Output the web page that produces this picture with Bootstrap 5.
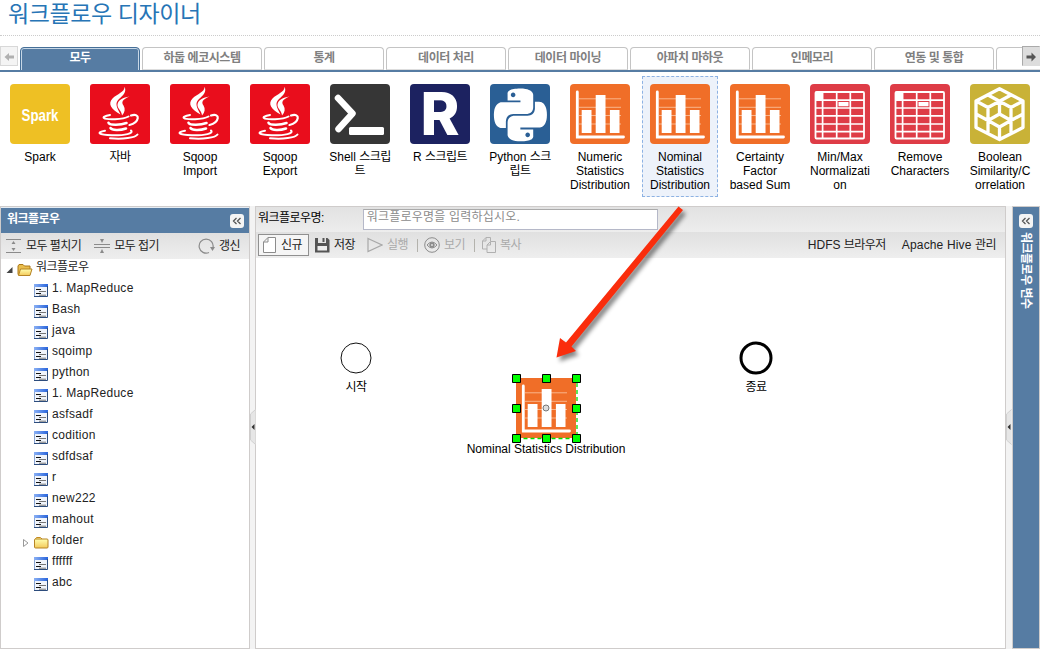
<!DOCTYPE html>
<html lang="ko">
<head>
<meta charset="utf-8">
<meta name="viewport" content="width=device-width, initial-scale=1">
<title>워크플로우 디자이너</title>
<link rel="stylesheet" href="https://cdn.jsdelivr.net/npm/bootstrap@5.3.0/dist/css/bootstrap.min.css">
<script src="https://cdn.jsdelivr.net/npm/bootstrap@5.3.0/dist/js/bootstrap.bundle.min.js"></script>
<style>
  :root { --blue: #567ca3; --line: #cfcccb; }
  body { width: 1040px; height: 649px; font: 12px/14px "Liberation Sans", "Noto Sans CJK KR", sans-serif; color: #222; background: #fff; }
  svg { display: block; flex: none; }
  .ko { letter-spacing: -.55px; }
  .page-title { height: 36px; padding: 0 0 0 8px; font-size: 23px; line-height: 28px; letter-spacing: -.4px; color: #2775b6; border-bottom: 1px dotted #ccc; }
  .tab-strip { height: 36px; padding: 11px 0 0 20px; border-bottom: 2px solid var(--blue); gap: 2px; }
  .tab-strip .tab-item { flex: 0 0 120px; height: 23px; border: 1px solid #c4c4c4; border-bottom-color: #ddd; border-radius: 4px 4px 0 0; text-align: center; font-weight: 700; line-height: 20px; letter-spacing: -.45px; color: #808080; box-shadow: inset 0 0 0 1px #fff; }
  .tab-strip .tab-item.active { color: #fff; background: var(--blue); border-color: #456f98; box-shadow: inset 0 1px 0 #c7d7e6, inset 1px 0 0 #c7d7e6, inset -1px 0 0 #c7d7e6; height: 24px; }
  .scroller { top: 10px; width: 18px; height: 20px; background: #f4f4f4; border: 1px solid #d8d8d8; }
  .scroller.next { right: 0; background: #ddd; border-color: #aaa #ddd #ddd #aaa; }
  .palette { height: 134px; padding: 4px 0 0 2px; gap: 4px; color: #000; }
  .tool { flex: 0 0 76px; height: 121px; padding: 7px 0 0 7px; border: 1px solid transparent; }
  .tool.picked { background: #edf2fa; border: 1px dashed #8db2e3; }
  .tool p { width: 60px; margin: 6px 0 0; text-align: center; white-space: nowrap; display: flex; flex-direction: column; align-items: center; }
  .tile { width: 60px; height: 60px; border-radius: 4px; }
  .tile-r { background: #1c2260; color: #fff; font: 800 59px/60px Inter, sans-serif; }
  .work { height: 443px; background: #f3f3f3; }
  .tree-panel { width: 250px; border: 1px solid var(--line); background: #fff; }
  .panel-head { height: 26px; background: var(--blue); border-top: 1px solid #e4ecf4; color: #fff; font-weight: 700; font-size: 12px; padding: 0 5px 0 6px; }
  .panel-head span { margin-top: -4px; }
  .collapser { width: 14px; height: 14px; background: #f4f4f4; border-radius: 3px; }
  .bar { height: 26px; background: linear-gradient(#e0e0e0, #eee); white-space: nowrap; }
  .bar span { margin-top: -1px; }
  .tree-row { height: 21px; padding-left: 33px; gap: 4px; white-space: nowrap; letter-spacing: .3px; margin-top: 0; }
  .tree-row svg { margin-top: 1px; }
  .tree-row span { margin-top: -5px; }
  .splitter { width: 6px; }
  .grip { left: 0; top: 203px; }
  .center-panel { width: 751px; border: 1px solid var(--line); background: #fff; }
  .name-row { height: 25px; background: linear-gradient(#e2e2e2, #ededed); padding-left: 2px; color: #000; }
  .name-input { width: 295px; height: 21px; margin-left: 39px; padding: 0 3px; border: 1px solid #b5b8c8; border-top-color: #aaa; background: #fff; color: #8c8c8c; line-height: 15px; letter-spacing: .2px; }
  .new-btn { width: 51px; height: 22px; border: 1px solid #909090; background: #f5f5f5; }
  .off { color: #aaa; }
  .sep { width: 1px; height: 13px; background: #b3b2ac; }
  .vars-panel { width: 28px; border: 1px solid var(--line); background: var(--blue); padding-top: 7px; }
  .vertical { writing-mode: vertical-rl; text-orientation: sideways; color: #fff; font-weight: 700; margin-top: 4px; letter-spacing: -.5px; }
  .node-text { color: #000; white-space: nowrap; transform: translateX(-50%); }
</style>
</head>
<body class="overflow-hidden position-relative">

<svg width="0" height="0" class="position-absolute" aria-hidden="true">
  <defs>
    <linearGradient id="fold" x2="0" y2="1"><stop stop-color="#ffffb0"/><stop offset="1" stop-color="#f3c95a"/></linearGradient>
    <linearGradient id="headblue"><stop stop-color="#8ab0f4"/><stop offset="1" stop-color="#2864dc"/></linearGradient>
    <symbol id="java" viewBox="0 0 60 60">
      <rect width="60" height="60" rx="3" fill="#e90d1c"/>
      <g fill="#fff">
        <path d="M34.5 2.8C37 8 33 11.500 29 15C25 19 26 22 30.500 30.500C21 25 17.500 20 22.500 14.500C27 10 35 8 34.500 2.800Z"/>
        <path d="M39.500 12.500C32.500 15.500 31 18 33.500 21.500C35.500 25 35 28 32 31.500C32 27 27 24.500 27.500 20.500C28 16 33 13.500 39.500 12.500Z"/>
      </g>
      <g fill="none" stroke="#fff" stroke-linecap="round">
        <path stroke-width="2" d="M20 31C9 33 13 35.700 25 35.200C31 35 36 34 38.500 32.500"/>
        <path stroke-width="2.200" d="M41 31.500C51 28.500 49.500 38.500 39.500 41"/>
        <path stroke-width="2.600" d="M18.500 38.800C19 41.200 30 41.500 36.500 39M20.500 44C22 46.500 30 46.500 36 44.500"/>
        <path stroke-width="2" d="M15 46.800C6 48.500 8 51 22 51.300C35 51.500 44 49.500 41 46.500M20 54.300C33 55.300 45 54 47.500 50.500"/>
      </g>
    </symbol>
    <symbol id="stats" viewBox="0 0 60 60">
      <path stroke="#f9b48a" stroke-width="1" d="M9 14.800H51M9 23.300H51M9 31.500H51M9 40H51"/>
      <path fill="none" stroke="#fff" stroke-width="2.800" stroke-linecap="round" d="M7.300 8V53H53.500"/>
      <path fill="#fff" d="M11.700 26h9.800v23h-9.800zM25.700 11h9.800v38h-9.800zM39.900 26h9.600v23h-9.600z"/>
    </symbol>
    <symbol id="grid" viewBox="0 0 60 60">
      <rect width="60" height="60" rx="4" fill="#de3c46"/>
      <rect x="5.500" y="8" width="48.500" height="46.500" rx="1" fill="none" stroke="#fff" stroke-width="1.800"/>
      <path stroke="#fff" stroke-width="1.700" d="M12.600 8V54.500M26.700 8V54.500M40.300 8V54.500M5.500 16.200H54M5.500 24H54M5.500 31.900H54M5.500 40H54M5.500 47.700H54"/>
      <path fill="#fff" d="M5.500 8H12.600V16.200H5.500zM28.500 18H38.500V22.200H28.500z"/>
    </symbol>
    <symbol id="leaf" viewBox="0 0 14 14">
      <path fill="#f0f4fb" d="M0 0h14v13H0z"/><path fill="url(#headblue)" d="M0 0h14v3H0z"/>
      <path fill="none" stroke="#8ba6d3" d="M.5 3V13"/><path fill="none" stroke="#2c4c7c" d="M13.500 2V12.500H0"/>
      <path stroke="#111" d="M2 5.500h5M2 9.500h5"/><path stroke="#777" d="M5 7.500h7M5 11.200h7"/>
    </symbol>
    <symbol id="chev" viewBox="0 0 14 14"><path fill="none" stroke="#555" stroke-width="1.300" d="M6.500 4 3.500 7l3 3M10.500 4l-3 3 3 3"/></symbol>
    <symbol id="grab" viewBox="0 0 6 36"><path fill="#e6e6e6" stroke="#d0d0d0" d="M5.500.5.5 5V31L5.500 35.500"/><path fill="#333" d="M4.500 15v6L1.500 18z"/></symbol>
  </defs>
</svg>

<h1 class="page-title m-0 fw-normal">워크플로우 디자이너</h1>

<nav class="tab-strip d-flex position-relative overflow-hidden">
  <div class="scroller position-absolute start-0"><svg width="16" height="18"><path fill="#b0b0b0" d="M3.500 10 8 6v2.500h5v3H8V14z"/></svg></div>
  <div class="tab-item active">모두</div><div class="tab-item">하둡 에코시스템</div><div class="tab-item">통계</div>
  <div class="tab-item">데이터 처리</div><div class="tab-item">데이터 마이닝</div><div class="tab-item">아파치 마하웃</div>
  <div class="tab-item">인메모리</div><div class="tab-item">연동 및 통합</div><div class="tab-item"></div>
  <div class="scroller next position-absolute"><svg width="16" height="18"><path fill="#555" d="M13 10 8.500 5.500v3h-5v3h5v3z"/></svg></div>
</nav>

<section class="palette d-flex">
  <div class="tool"><svg width="60" height="60"><rect width="60" height="60" rx="4" fill="#eec024"/><text x="11.500" y="37" textLength="37" lengthAdjust="spacingAndGlyphs" font-family="Liberation Sans" font-weight="700" font-size="16" fill="#fff">Spark</text></svg><p><span>Spark</span></p></div>
  <div class="tool"><svg width="60" height="60"><use href="#java"/></svg><p><span class="ko">자바</span></p></div>
  <div class="tool"><svg width="60" height="60"><use href="#java"/></svg><p><span>Sqoop</span><span>Import</span></p></div>
  <div class="tool"><svg width="60" height="60"><use href="#java"/></svg><p><span>Sqoop</span><span>Export</span></p></div>
  <div class="tool"><svg width="60" height="60"><rect width="60" height="60" rx="4" fill="#363636"/><path fill="none" stroke="#fff" stroke-width="6.500" stroke-linecap="round" stroke-linejoin="round" d="M8 14 22.500 29.500 8.500 45"/><rect x="19" y="43" width="35" height="8" rx="1.500" fill="#fff"/></svg><p><span>Shell <span class="ko">스크립</span></span><span>트</span></p></div>
  <div class="tool"><div class="tile tile-r text-center">R</div><p><span>R <span class="ko">스크립트</span></span></p></div>
  <div class="tool"><svg width="60" height="60"><rect width="60" height="60" rx="4" fill="#2a5f95"/><path fill="#fff" transform="translate(4 4.500) scale(2.200)" d="M14.25.18l.9.2.73.26.59.3.45.32.34.34.25.34.16.33.1.3.04.26.02.2-.01.13V8.5l-.05.63-.13.55-.21.46-.26.38-.3.31-.33.25-.35.19-.35.14-.33.1-.3.07-.26.04-.21.02H8.77l-.69.05-.59.14-.5.22-.41.27-.33.32-.27.35-.2.36-.15.37-.1.35-.07.32-.04.27-.02.21v3.06H3.17l-.21-.03-.28-.07-.32-.12-.35-.18-.36-.26-.36-.36-.35-.46-.32-.59-.28-.73-.21-.88-.14-1.05-.05-1.23.06-1.22.16-1.04.24-.87.32-.71.36-.57.4-.44.42-.33.42-.24.4-.16.36-.1.32-.05.24-.01h.16l.06.01h8.16v-.83H6.18l-.01-2.75-.02-.37.05-.34.11-.31.17-.28.25-.26.31-.23.38-.2.44-.18.51-.15.58-.12.64-.1.71-.06.77-.04.84-.02 1.27.05zm-6.3 1.98l-.23.33-.08.41.08.41.23.34.33.22.41.09.41-.09.33-.22.23-.34.08-.41-.08-.41-.23-.33-.33-.22-.41-.09-.41.09zm13.09 3.95l.28.06.32.12.35.18.36.27.36.35.35.47.32.59.28.73.21.88.14 1.04.05 1.23-.06 1.23-.16 1.04-.24.86-.32.71-.36.57-.4.45-.42.33-.42.24-.4.16-.36.09-.32.05-.24.02-.16-.01h-8.22v.82h5.84l.01 2.76.02.36-.05.34-.11.31-.17.29-.25.25-.31.24-.38.2-.44.17-.51.15-.58.13-.64.09-.71.07-.77.04-.84.01-1.27-.04-1.07-.14-.9-.2-.73-.25-.59-.3-.45-.33-.34-.34-.25-.34-.16-.33-.1-.3-.04-.25-.02-.2.01-.13v-5.34l.05-.64.13-.54.21-.46.26-.38.3-.32.33-.24.35-.2.35-.14.33-.1.3-.06.26-.04.21-.02.13-.01h5.84l.69-.05.59-.14.5-.21.41-.28.33-.32.27-.35.2-.36.15-.36.1-.35.07-.32.04-.28.02-.21V6.07h2.09l.14.01zm-6.47 14.25l-.23.33-.08.41.08.41.23.33.33.23.41.08.41-.08.33-.23.23-.33.08-.41-.08-.41-.23-.33-.33-.23-.41-.08-.41.08z"/></svg><p><span>Python <span class="ko">스크</span></span><span class="ko">립트</span></p></div>
  <div class="tool"><svg width="60" height="60"><rect width="60" height="60" rx="4" fill="#f06e28"/><use href="#stats"/></svg><p><span>Numeric</span><span>Statistics</span><span>Distribution</span></p></div>
  <div class="tool picked"><svg width="60" height="60"><rect width="60" height="60" rx="4" fill="#f06e28"/><use href="#stats"/></svg><p><span>Nominal</span><span>Statistics</span><span>Distribution</span></p></div>
  <div class="tool"><svg width="60" height="60"><rect width="60" height="60" rx="4" fill="#f06e28"/><use href="#stats"/></svg><p><span>Certainty</span><span>Factor</span><span>based Sum</span></p></div>
  <div class="tool"><svg width="60" height="60"><use href="#grid"/></svg><p><span>Min/Max</span><span>Normalizati</span><span>on</span></p></div>
  <div class="tool"><svg width="60" height="60"><use href="#grid"/></svg><p><span>Remove</span><span>Characters</span></p></div>
  <div class="tool"><svg width="60" height="60"><rect width="60" height="60" rx="4" fill="#c9b237"/><path fill="none" stroke="#fff" stroke-width="3.300" stroke-linejoin="round" d="M29.500 4.700 53 17V43.500L29.500 55.500 6 43.500V17zM18 11 41 23.500V49.500M41 11 18 23.500V49.500M6 17 18 23.500M53 17 41 23.500M29.500 17V30L18 36.500 29.500 43 41 36.500 29.500 30M6 30 18 36.500M53 30 41 36.500M29.500 43V55"/></svg><p><span>Boolean</span><span>Similarity/C</span><span>orrelation</span></p></div>
</section>

<main class="work d-flex">
  <aside class="tree-panel">
    <div class="panel-head d-flex align-items-center justify-content-between"><span class="ko">워크플로우</span><div class="collapser"><svg width="14" height="14"><use href="#chev"/></svg></div></div>
    <div class="bar d-flex align-items-center">
      <svg class="ms-1" width="17" height="16" fill="none" stroke="#8b8b8b"><path d="M1 1.500H16M1 14.500H16"/><path fill="#8b8b8b" stroke="none" d="M8.500 3l2 3h-4zM8.500 13l2-3h-4z"/></svg><span class="ko ms-1">모두 펼치기</span>
      <svg style="margin-left:13px" width="17" height="16"><path stroke="#8b8b8b" d="M0 6.500H16M0 9.500H16"/><path fill="#8b8b8b" d="M8 5l2-4H6zM8 11l2 4H6z"/></svg><span class="ko" style="margin-left:3px">모두 접기</span>
      <svg class="ms-auto" width="17" height="16"><path fill="none" stroke="#8b8b8b" stroke-width="1.200" d="M11 14.500A7 7 0 1 1 15 9.500"/><path fill="#8b8b8b" d="M12 9h5l-2.500 4z"/></svg><span class="ko" style="margin:-1px 9px 0 4px">갱신</span>
    </div>
    <div class="tree-row ps-1 d-flex align-items-center"><svg width="9" height="10"><path fill="#444" d="M7.500 2v6h-6z"/></svg><svg width="16" height="14" style="margin-left:-1px"><path fill="#e9bd4d" stroke="#ac7918" d="M1 11.500V3l1-1.500h4L7.500 3H13v8.500z"/><path fill="url(#fold)" stroke="#b68425" d="M1.500 12.500 3.500 6H15l-2 6.500z"/></svg><span class="ko" style="margin-left:-1px">워크플로우</span></div>
    <div class="tree-row d-flex align-items-center"><svg width="14" height="14"><use href="#leaf"/></svg><span>1. MapReduce</span></div>
    <div class="tree-row d-flex align-items-center"><svg width="14" height="14"><use href="#leaf"/></svg><span>Bash</span></div>
    <div class="tree-row d-flex align-items-center"><svg width="14" height="14"><use href="#leaf"/></svg><span>java</span></div>
    <div class="tree-row d-flex align-items-center"><svg width="14" height="14"><use href="#leaf"/></svg><span>sqoimp</span></div>
    <div class="tree-row d-flex align-items-center"><svg width="14" height="14"><use href="#leaf"/></svg><span>python</span></div>
    <div class="tree-row d-flex align-items-center"><svg width="14" height="14"><use href="#leaf"/></svg><span>1. MapReduce</span></div>
    <div class="tree-row d-flex align-items-center"><svg width="14" height="14"><use href="#leaf"/></svg><span>asfsadf</span></div>
    <div class="tree-row d-flex align-items-center"><svg width="14" height="14"><use href="#leaf"/></svg><span>codition</span></div>
    <div class="tree-row d-flex align-items-center"><svg width="14" height="14"><use href="#leaf"/></svg><span>sdfdsaf</span></div>
    <div class="tree-row d-flex align-items-center"><svg width="14" height="14"><use href="#leaf"/></svg><span>r</span></div>
    <div class="tree-row d-flex align-items-center"><svg width="14" height="14"><use href="#leaf"/></svg><span>new222</span></div>
    <div class="tree-row d-flex align-items-center"><svg width="14" height="14"><use href="#leaf"/></svg><span>mahout</span></div>
    <div class="tree-row d-flex align-items-center" style="padding-left:21px"><svg width="8" height="10"><path fill="#fff" stroke="#999" d="M1.500 1.500v7L6 5z"/></svg><svg width="15" height="14"><path fill="#fff3a0" stroke="#c58b20" d="M1 3.500 2.500 1.500h4L8 3"/><rect x=".5" y="3" width="13.500" height="9" rx="1" fill="url(#fold)" stroke="#b68425"/></svg><span style="margin-left:-1px">folder</span></div>
    <div class="tree-row d-flex align-items-center"><svg width="14" height="14"><use href="#leaf"/></svg><span>ffffff</span></div>
    <div class="tree-row d-flex align-items-center"><svg width="14" height="14"><use href="#leaf"/></svg><span>abc</span></div>
  </aside>
  <div class="splitter position-relative" style="width:5px"><svg class="grip position-absolute" width="6" height="36"><use href="#grab"/></svg></div>

  <section class="center-panel">
    <div class="name-row d-flex align-items-center"><span class="ko" style="margin-top:-3px">워크플로우명:</span><div class="name-input">워크플로우명을 입력하십시오.</div></div>
    <div class="bar d-flex align-items-center ps-1">
      <div class="new-btn d-flex align-items-center" style="margin-left:-2px"><svg class="ms-1" width="14" height="16"><path fill="#fff" stroke="#8c8c8c" d="M5 .5H12.500V15.500H.5V5H5zM.5 5 5 .5"/></svg><span class="ko" style="margin-left:4px">신규</span></div>
      <svg style="margin-left:5px" width="16" height="16"><path fill="#555" d="M1 1h3v5h8V1h1.500L15.500 3v12.500H1z"/><path fill="#555" d="M8.500 1h2v4h-2z"/><path fill="#eee" d="M3.500 9h9.500v4.500H3.500z"/></svg><span class="ko" style="margin-left:4px">저장</span>
      <svg style="margin-left:12px" width="16" height="16"><path fill="none" stroke="#a8a8a8" stroke-width="1.200" d="M1 1.500 15 8 1 14.500z"/></svg><span class="ko off" style="margin-left:4px">실행</span>
      <i class="sep" style="margin-left:9px"></i>
      <svg style="margin-left:6px" width="16" height="16" fill="none" stroke="#8c8c8c"><circle cx="8" cy="8" r="7.300"/><path d="M3 8Q8 2 13 8Q8 14 3 8z"/><circle cx="8" cy="8" r="1.800" stroke-width="1.800"/></svg><span class="ko off" style="margin-left:4px">보기</span>
      <i class="sep" style="margin-left:9px"></i>
      <svg style="margin-left:7px" width="15" height="16" fill="none" stroke="#b0b0b0"><path d="M5 12H.5V4L4 .500H8.500V4M5 8 8.500 4.500H13.500V15.500H5zM5 8H8.500V4.500M.5 4H4V.500"/></svg><span class="ko off" style="margin-left:3px">복사</span>
      <span class="ms-auto">HDFS <span class="ko">브라우저</span></span><span style="margin:-1px 9px 0 16px;letter-spacing:.15px">Apache Hive <span class="ko">관리</span></span>
    </div>
    <!-- free canvas holding the workflow nodes -->
    <div class="position-relative">
      <svg class="position-absolute start-0 top-0" width="748" height="220">
        <circle cx="100" cy="100" r="15" fill="#fff" stroke="#111"/>
        <circle cx="500" cy="100" r="15" fill="#fff" stroke="#000" stroke-width="3"/>
        <g transform="translate(260 120)">
          <rect width="60" height="60" fill="#f06e28"/><use href="#stats" width="60" height="60"/>
          <path d="M.5 60.500H61V.5" fill="none" stroke="#0d0" stroke-width="1.300" stroke-dasharray="4 3"/>
          <circle cx="30" cy="30" r="3" fill="#ddd" stroke="#777"/>
          <path fill="#0f0" stroke="#000" d="M-3.500-3.500h8v8h-8zM26.500-3.500h8v8h-8zM56.500-3.500h8v8h-8zM-3.500 26.500h8v8h-8zM56.500 26.500h8v8h-8zM-3.500 56.500h8v8h-8zM26.500 56.500h8v8h-8zM56.500 56.500h8v8h-8z"/>
        </g>
      </svg>
      <div class="node-text ko position-absolute" style="left:100px;top:122px">시작</div>
      <div class="node-text ko position-absolute" style="left:500px;top:122px">종료</div>
      <div class="node-text position-absolute" style="left:290px;top:184px">Nominal Statistics Distribution</div>
    </div>
  </section>
  <div class="splitter position-relative"><svg class="grip position-absolute" width="6" height="36"><use href="#grab"/></svg></div>
  <aside class="vars-panel d-flex flex-column align-items-center"><div class="collapser"><svg width="14" height="14"><use href="#chev"/></svg></div><div class="vertical">워크플로우 변수</div></aside>
</main>

<svg class="position-absolute" style="left:540px;top:195px;filter:drop-shadow(3px 4px 2px #0007)" width="160" height="175"><path fill="#fa2d0c" d="M16.500 162.500 20 143 26 147.500 138.500 11.500 143 15 31.500 151.500 36 156z"/></svg>
</body>
</html>
